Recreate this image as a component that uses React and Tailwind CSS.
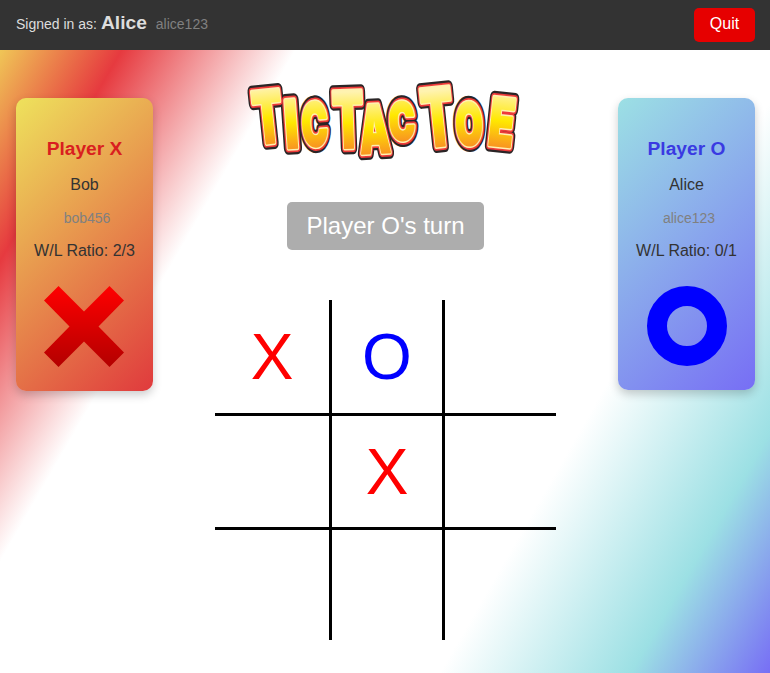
const FONT = '"Liberation Sans", Arial, sans-serif';

// centre x, baseline, size, horizontal scale, tilt (page pixels)
const LOGO_LETTERS = [
  { ch: 'T', x: 269.5, y: 143, size: 72, sx: 0.6, rot: -6 },
  { ch: 'I', x: 292, y: 148, size: 66, sx: 0.7, rot: -4 },
  { ch: 'C', x: 315, y: 146, size: 60, sx: 0.58, rot: -3 },
  { ch: 'T', x: 348, y: 148, size: 78, sx: 0.58, rot: -2 },
  { ch: 'A', x: 375, y: 153, size: 66, sx: 0.58, rot: -3 },
  { ch: 'C', x: 402, y: 140, size: 52, sx: 0.66, rot: -3 },
  { ch: 'T', x: 439.5, y: 146, size: 80, sx: 0.58, rot: -6 },
  { ch: 'O', x: 469, y: 145, size: 58, sx: 0.6, rot: -2 },
  { ch: 'E', x: 498.5, y: 146, size: 66, sx: 0.62, rot: 6 },
];

function Logo() {
  const layers = [
    { name: 'dark', fill: '#2a2526', stroke: '#2a2526', width: 13 },
    { name: 'red', fill: '#ee3a3a', stroke: '#ee3a3a', width: 8.5 },
    { name: 'pale', fill: '#fff0b0', stroke: '#fff0b0', width: 5 },
    { name: 'fill', fill: 'url(#logoFill)', stroke: 'url(#logoFill)', width: 2 },
  ];
  return (
    <svg width="290" height="120" viewBox="0 0 290 120" className="block overflow-visible">
      <defs>
        <linearGradient id="logoFill" gradientUnits="userSpaceOnUse" x1="0" y1="-56" x2="0" y2="0">
          <stop offset="0" stopColor="#fff3b0" />
          <stop offset="0.55" stopColor="#ffe800" />
          <stop offset="1" stopColor="#f9981f" />
        </linearGradient>
      </defs>
      {layers.map((layer) =>
        LOGO_LETTERS.map((l, i) => (
          <text
            key={`${layer.name}${i}`}
            transform={`translate(${l.x - 240} ${l.y - 60}) rotate(${l.rot}) scale(${l.sx} 1)`}
            fontSize={l.size}
            fontWeight={900}
            fontFamily='Inter, "Liberation Sans", sans-serif'
            textAnchor="middle"
            fill={layer.fill}
            stroke={layer.stroke}
            strokeWidth={layer.width}
            strokeLinejoin="round"
          >
            {l.ch}
          </text>
        ))
      )}
    </svg>
  );
}

function BigX() {
  return (
    <svg width="80" height="81" viewBox="0 0 80 81" className="block -ml-px">
      <defs>
        <linearGradient id="bigX" x1="0" y1="0" x2="0" y2="1">
          <stop offset="0" stopColor="#ff0000" />
          <stop offset="1" stopColor="#b30000" />
        </linearGradient>
      </defs>
      <path d="M14.5 0 40 25.5 65.5 0 80 14.5 54.5 40.5 80 66.5 65.5 81 40 55.5 14.5 81 0 66.5 25.5 40.5 0 14.5Z" fill="url(#bigX)" />
    </svg>
  );
}

function PlayerCard({ title, titleClass, name, username, ratio, gradient, height, children }) {
  return (
    <div className={`w-[137px] ${height} ${gradient} rounded-[10px] shadow-[0_4px_10px_rgba(0,0,0,0.2)] flex flex-col items-center pt-[40px]`}>
      <div className={`text-[19.2px] leading-[22px] font-bold ${titleClass}`}>{title}</div>
      <div className="mt-[16px] text-base leading-[18px] text-[#333]">{name}</div>
      <div className="mt-[16px] ml-[5px] text-sm leading-4 text-[#808080]">{username}</div>
      <div className="mt-[16px] text-base leading-[18px] text-[#333] whitespace-nowrap">{ratio}</div>
      <div className="mt-[26px]">{children}</div>
    </div>
  );
}

const CELLS = ['X', 'O', '', '', 'X', '', '', '', ''];

function Board() {
  return (
    <div className="mt-[50px] grid grid-cols-[117px_113px_111px] grid-rows-[116px_114px_110px]">
      {CELLS.map((c, i) => (
        <div
          key={i}
          className={`flex items-center justify-center text-[64px] leading-none border-black ${i % 3 < 2 ? 'border-r-[3px]' : ''} ${i < 6 ? 'border-b-[3px]' : ''} ${c === 'X' ? 'text-[#ff0000]' : 'text-[#0000ff]'}`}
        >
          {c}
        </div>
      ))}
    </div>
  );
}

export default function App() {
  return (
    <div
      className="min-h-[673px] bg-[linear-gradient(120deg,#f2e75c_0%,#e63a3f_13%,#ffffff_28%,#ffffff_71.5%,#9ce0e4_88%,#776ef5_100%)]"
      style={{ fontFamily: FONT }}
    >
      <header className="h-[50px] bg-[#333] flex items-center justify-between pl-4 pr-[15px]">
        <div className="flex items-baseline pb-1 text-sm text-[#ddd]">
          <span>Signed in as:</span>
          <span className="ml-1 text-[19.2px] font-bold">Alice</span>
          <span className="ml-[9px] text-[#808080]">alice123</span>
        </div>
        <button className="w-[61px] h-[34px] pb-[2px] bg-[#e60000] text-white text-base rounded-[5px]">Quit</button>
      </header>
      <main className="flex items-start justify-between pl-4 pr-[15px] pt-12">
        <PlayerCard
          title="Player X"
          titleClass="text-[#d91f1f]"
          name="Bob"
          username="bob456"
          ratio="W/L Ratio: 2/3"
          gradient="bg-[linear-gradient(135deg,#eee25c,#e03a3d)]"
          height="h-[293px]"
        >
          <BigX />
        </PlayerCard>
        <div className="flex flex-col items-center -mt-[38px]">
          <Logo />
          <div className="mt-[22px] px-5 py-[10px] bg-[#adadad] text-white text-2xl leading-[28px] rounded-[5px]">Player O's turn</div>
          <Board />
        </div>
        <PlayerCard
          title="Player O"
          titleClass="text-[#3a3ae2]"
          name="Alice"
          username="alice123"
          ratio="W/L Ratio: 0/1"
          gradient="bg-[linear-gradient(135deg,#9ce0e4,#776ef5)]"
          height="h-[292px]"
        >
          <div className="w-20 h-20 rounded-full border-[20px] border-[#0000ff]" />
        </PlayerCard>
      </main>
    </div>
  );
}
